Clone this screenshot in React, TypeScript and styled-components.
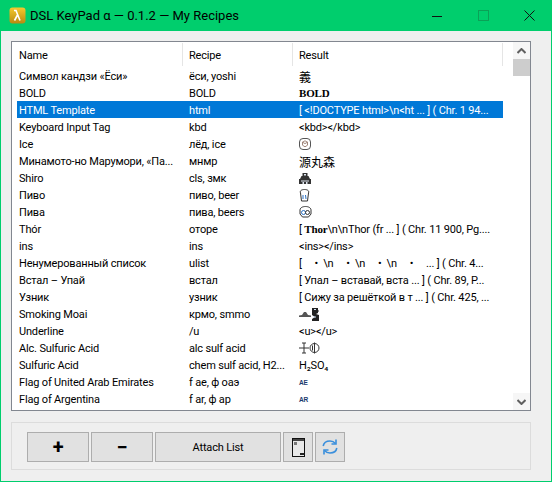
import React from "react";
import styled, { createGlobalStyle } from "styled-components";

const Global = createGlobalStyle`
  html, body { margin: 0; padding: 0; background: #efefef; }
  * { box-sizing: border-box; }
`;
const FONT = `Roboto, "Noto Sans CJK JP", sans-serif`;

const Win = styled.div`
  width: 552px; height: 482px; display: flex; flex-direction: column;
  border: 1px solid #00ce6d; border-top: 0; background: #efefef;
  font-family: ${FONT}; font-size: 11px; letter-spacing: -0.17px; color: #000; overflow: hidden;
`;
const TitleBar = styled.div`
  height: 31px; flex: none; background: #00ce6d; display: flex; align-items: center;
  padding-left: 9px; margin: 0 -1px;
`;
const Title = styled.div`
  font-size: 13px; letter-spacing: 0; margin-left: 4px; flex: 1; white-space: nowrap;
`;
const Caption = styled.div`
  width: 46px; height: 31px; display: flex; align-items: center; justify-content: center;
`;
const Body = styled.div`
  flex: 1; display: flex; flex-direction: column; gap: 11px; padding: 10px 20px 11px 10px;
`;
const ListBox = styled.div`
  height: 370px; flex: none; border: 1px solid #828790; background: #fff; display: flex;
  padding-left: 5px;
`;
const Table = styled.div`
  width: 486px; flex: none; display: flex; flex-direction: column;
`;
const Row = styled.div<{ $selected?: boolean }>`
  display: grid; grid-template-columns: 166px 110px 210px; height: 17px; align-items: center;
  background: ${(p) => (p.$selected ? "#0078d7" : "transparent")};
  color: ${(p) => (p.$selected ? "#fff" : "#000")};
`;
const HeaderRow = styled(Row)`
  height: 25px; align-items: stretch;
`;
const HeaderCell = styled.div`
  border-right: 1px solid #e5e5e5; margin: 1px 0; display: flex; align-items: center;
  padding: 1px 0 0 6px;
  &:first-child { padding-left: 2px; }
`;
const Cell = styled.div`
  padding: 1px 0 0 6px; white-space: pre; overflow: hidden; display: flex; align-items: center; height: 17px;
  &:first-child { padding-left: 2px; }
`;
const Kanji = styled.span`
  font-family: "Noto Sans CJK JP", sans-serif; font-size: 12px; letter-spacing: 0; line-height: 15px;
`;
const SerifBold = styled.span`
  font-family: "Liberation Serif", serif; font-weight: 700; font-size: 11px;
`;
const FlagText = styled.span`
  font-family: "Liberation Sans", sans-serif; font-weight: 700; font-size: 6.5px; color: #1c3a6e;
`;
const Spacer = styled.div`flex: 1;`;
const ScrollBar = styled.div`
  width: 17px; flex: none; display: flex; flex-direction: column; background: #fff;
`;
const ScrollBtn = styled.div`
  height: 17px; flex: none; display: flex; align-items: center; justify-content: center; background: #f6f6f6;
`;
const Thumb = styled.div`
  height: 17px; flex: none; background: #cdcdcd;
`;
const Group = styled.div`
  height: 48px; flex: none; border: 1px solid #dcdcdc; display: flex; gap: 2px; padding: 9px 15px;
`;
const Btn = styled.button<{ $w: number; $big?: boolean }>`
  width: ${(p) => p.$w}px; height: 30px; border: 1px solid #adadad; background: #e1e1e1; padding: 0;
  display: flex; align-items: center; justify-content: center; color: #000;
  font-family: ${FONT}; font-size: ${(p) => (p.$big ? 20 : 11)}px; font-weight: ${(p) => (p.$big ? 700 : 400)};
  letter-spacing: -0.17px;
`;

const Ice = () => (
  <svg width="12" height="12" viewBox="0 0 12 12" fill="none" stroke="#555">
    <rect x=".5" y=".5" width="11" height="11" rx="3.500" />
    <path d="M6 2.800 8.500 4.200v3L6 8.800 3.500 7.200v-3zM3.500 4.200 6 5.600l2.500-1.400" strokeWidth=".8" stroke="#8a6a5a" />
  </svg>
);
const Castle = () => (
  <svg width="12" height="11" viewBox="0 0 12 11">
    <path d="M3.500 0h5v3h-5zM2.500 3h7l1.500 3H1zM0 6h12v5H0z" fill="#333" />
    <path d="M5 1h2v1.500H5zM2 7.500h8v1H2zM3.500 9h1.500v2H3.500zM7 9h1.500v2H7z" fill="#dfe6f0" />
  </svg>
);
const Mug = () => (
  <svg width="11" height="13" viewBox="0 0 11 13" fill="none" stroke="#333">
    <path d="M1.500 4C.5 1.500 3 .5 5.500.5S10.500 1.500 9.500 4L8.500 12h-6z" fill="#fff" />
    <path d="M4 6v4M6.500 6l.5 4" stroke="#2a6fc0" />
  </svg>
);
const Mugs = () => (
  <svg width="13" height="12" viewBox="0 0 13 12" fill="none" stroke="#333">
    <path d="M1 5C.5 1.500 4 .5 6.500.5S12.500 1.500 12 5v3l-2.500 3h-6L1 8z" fill="#fff" />
    <circle cx="4.500" cy="6.500" r="2" stroke="#2a6fc0" />
    <circle cx="8.500" cy="6.500" r="2" />
  </svg>
);
const Moai = () => (
  <svg width="20" height="13" viewBox="0 0 20 13">
    <path d="M0 7.500 3 7l2-3h2l2 3 3 .5V9H0z" fill="#555" />
    <path d="M13 0h6v2l1 1-1 1v1l-2 1 3 1v6h-7v-2l3-2-3-2z" fill="#222" />
    <path d="M15 1.500h2M14 9h3" stroke="#cfe0f5" />
  </svg>
);
const Alc = () => (
  <svg width="21" height="12" viewBox="0 0 21 12" fill="none" stroke="#333">
    <path d="M0 6h10M5 1v10M3 1h4M3 11h4" />
    <circle cx="15.500" cy="6" r="4.500" />
    <path d="M15.500 .5v11M13.500 3.500v5" />
  </svg>
);
const Phone = () => (
  <svg width="13" height="19" viewBox="0 0 13 19">
    <rect x=".5" y=".5" width="12" height="18" fill="#e8e8e8" stroke="#111" />
    <rect x="1" y="1" width="11" height="2" fill="#444" />
    <rect x="2" y="4" width="3" height="3" fill="#777" />
    <rect x="8" y="15" width="4" height="2" fill="#222" />
  </svg>
);
const Refresh = () => (
  <svg width="16" height="18" viewBox="0 0 16 18" fill="none" stroke="#3a8fdc" strokeWidth="1.600">
    <path d="M1.200 8C1.800 4.500 4.500 3 8 3c2.500 0 4 .8 5.500 2.500" />
    <path d="M14 1.500V6H9.500" />
    <path d="M14.800 10C14.200 13.500 11.500 15 8 15c-2.500 0-4-.8-5.500-2.500" />
    <path d="M2 16.500V12h4.500" />
  </svg>
);

type R = { n: string; r: string; v: React.ReactNode; sel?: boolean };
const rows: R[] = [
  { n: "Символ кандзи «Ёси»", r: "ёси, yoshi", v: <Kanji>義</Kanji> },
  { n: "BOLD", r: "BOLD", v: <SerifBold>BOLD</SerifBold> },
  { n: "HTML Template", r: "html", v: "[ <!DOCTYPE html>\\n<ht ... ] ( Chr. 1 94...", sel: true },
  { n: "Keyboard Input Tag", r: "kbd", v: "<kbd></kbd>" },
  { n: "Ice", r: "лёд, ice", v: <Ice /> },
  { n: "Минамото-но Марумори, «Па...", r: "мнмр", v: <Kanji>源丸森</Kanji> },
  { n: "Shiro", r: "cls, змк", v: <Castle /> },
  { n: "Пиво", r: "пиво, beer", v: <Mug /> },
  { n: "Пива", r: "пива, beers", v: <Mugs /> },
  { n: "Thór", r: "оторе", v: <span>[ <SerifBold>Thor</SerifBold>\n\nThor (fr ... ] ( Chr. 11 900, Pg....</span> },
  { n: "ins", r: "ins", v: "<ins></ins>" },
  { n: "Ненумерованный список", r: "ulist", v: "[     •  \\n     •  \\n     •  \\n     •     ... ] ( Chr. 4..." },
  { n: "Встал – Упай", r: "встал", v: "[ Упал – вставай, вста ... ] ( Chr. 89, P..." },
  { n: "Узник", r: "узник", v: "[ Сижу за решёткой в т ... ] ( Chr. 425, ..." },
  { n: "Smoking Moai", r: "крмо, smmo", v: <Moai /> },
  { n: "Underline", r: "/u", v: "<u></u>" },
  { n: "Alc. Sulfuric Acid", r: "alc sulf acid", v: <Alc /> },
  { n: "Sulfuric Acid", r: "chem sulf acid, H2...", v: "H₂SO₄" },
  { n: "Flag of United Arab Emirates", r: "f ae, ф оаэ", v: <FlagText>AE</FlagText> },
  { n: "Flag of Argentina", r: "f ar, ф ар", v: <FlagText>AR</FlagText> },
];

export default function App() {
  return (
    <Win>
      <Global />
      <TitleBar>
        <svg width="17" height="17" viewBox="0 0 17 17">
          <defs>
            <linearGradient id="g" x1="0" y1="0" x2="0" y2="1">
              <stop offset="0" stopColor="#f5c92e" />
              <stop offset="1" stopColor="#b98a10" />
            </linearGradient>
          </defs>
          <rect x=".5" y=".5" width="16" height="16" rx="3" fill="url(#g)" />
          <path d="M5 3.500h2l4 10M8.500 8l-3 5.500" stroke="#fff" strokeWidth="1.600" fill="none" />
        </svg>
        <Title>DSL KeyPad α — 0.1.2 — My Recipes</Title>
        <Caption>
          <svg width="10" height="10"><path d="M0 5.500h10" stroke="#111" /></svg>
        </Caption>
        <Caption>
          <svg width="11" height="11"><rect x=".5" y=".5" width="10" height="10" fill="none" stroke="#0aa257" /></svg>
        </Caption>
        <Caption>
          <svg width="11" height="11"><path d="M.5.500l10 10M10.500.500l-10 10" stroke="#111" /></svg>
        </Caption>
      </TitleBar>
      <Body>
        <ListBox>
          <Table>
            <HeaderRow>
              <HeaderCell>Name</HeaderCell>
              <HeaderCell>Recipe</HeaderCell>
              <HeaderCell>Result</HeaderCell>
            </HeaderRow>
            {rows.map((x) => (
              <Row key={x.n} $selected={x.sel}>
                <Cell>{x.n}</Cell>
                <Cell>{x.r}</Cell>
                <Cell>{x.v}</Cell>
              </Row>
            ))}
          </Table>
          <Spacer />
          <ScrollBar>
            <ScrollBtn>
              <svg width="9" height="6"><path d="M.5 5 4.500 1l4 4" fill="none" stroke="#606060" strokeWidth="2" /></svg>
            </ScrollBtn>
            <Thumb />
            <Spacer />
            <ScrollBtn>
              <svg width="9" height="6"><path d="M.5 1l4 4 4-4" fill="none" stroke="#606060" strokeWidth="2" /></svg>
            </ScrollBtn>
          </ScrollBar>
        </ListBox>
        <Group>
          <Btn $w={62} $big>+</Btn>
          <Btn $w={62} $big>−</Btn>
          <Btn $w={126}>Attach List</Btn>
          <Btn $w={30}><Phone /></Btn>
          <Btn $w={30}><Refresh /></Btn>
        </Group>
      </Body>
    </Win>
  );
}
